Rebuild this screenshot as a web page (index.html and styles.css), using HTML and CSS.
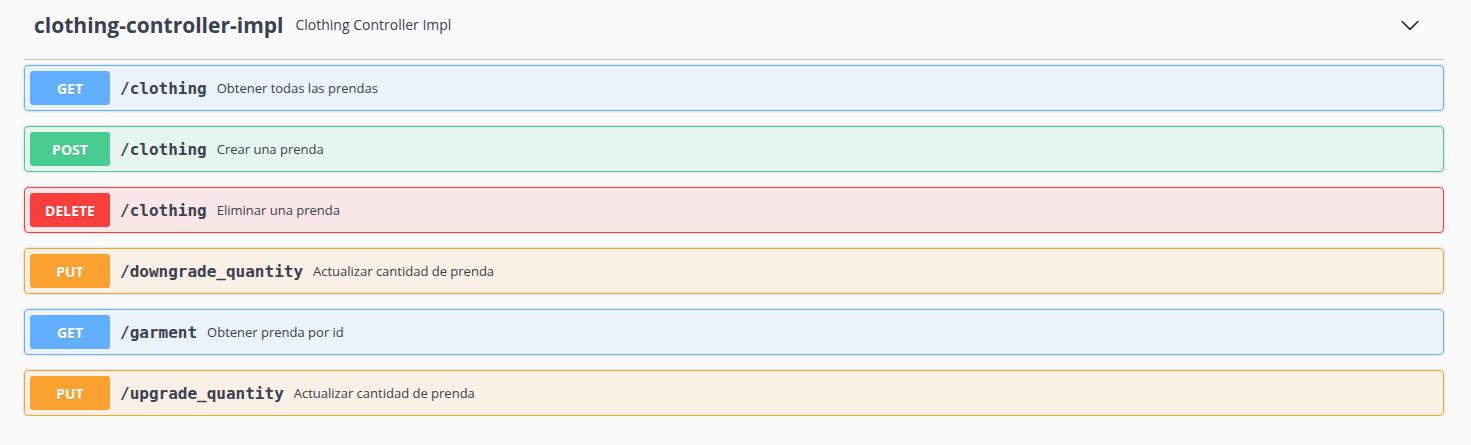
FILE: index.html
```html
<!DOCTYPE html>
<html>
<head>
<meta charset="utf-8">
<link rel="stylesheet" href="styles.css">
</head>
<body>
<div class="section">
  <h4 class="tag">
    <span class="tag-name">clothing-controller-impl</span>
    <small class="tag-desc">Clothing Controller Impl</small>
    <span class="spacer"></span>
    <svg class="arrow" width="20" height="20" viewBox="0 0 20 20"><path d="M17.418 6.109c.272-.268.709-.268.979 0s.271.701 0 .969l-7.908 7.83c-.27.268-.707.268-.979 0l-7.908-7.83c-.27-.268-.27-.701 0-.969.271-.268.709-.268.979 0L10 13.25l7.418-7.141z" fill="#1b1b1b"/></svg>
  </h4>
  <div class="ops">
    <div class="op get"><span class="method">GET</span><span class="path">/clothing</span><span class="desc">Obtener todas las prendas</span></div>
    <div class="op post"><span class="method">POST</span><span class="path">/clothing</span><span class="desc">Crear una prenda</span></div>
    <div class="op delete"><span class="method">DELETE</span><span class="path">/clothing</span><span class="desc">Eliminar una prenda</span></div>
    <div class="op put"><span class="method">PUT</span><span class="path">/downgrade_quantity</span><span class="desc">Actualizar cantidad de prenda</span></div>
    <div class="op get"><span class="method">GET</span><span class="path">/garment</span><span class="desc">Obtener prenda por id</span></div>
    <div class="op put"><span class="method">PUT</span><span class="path">/upgrade_quantity</span><span class="desc">Actualizar cantidad de prenda</span></div>
  </div>
</div>
</body>
</html>
```
FILE: styles.css
```css
html, body {
  margin: 0;
  padding: 0;
  background: #fafafa;
}
body {
  padding: 0 27px 0 24px;
  font-family: "Open Sans", sans-serif;
  color: #3b4151;
}
.tag {
  margin: 0 0 5px;
  height: 60px;
  box-sizing: border-box;
  padding: 0 24px 0 10px;
  display: flex;
  align-items: center;
  border-bottom: 1px solid rgba(59, 65, 81, 0.3);
  font-weight: 700;
}
.tag-name {
  font-size: 21px;
  font-weight: 700;
  color: #3b4151;
  position: relative;
  top: -5px;
}
.tag-desc {
  font-size: 14px;
  font-weight: 400;
  padding: 0 12px;
  position: relative;
  top: -5px;
}
.spacer { flex: 1; }
.arrow { position: relative; top: -5px; }
.ops {
  display: flex;
  flex-direction: column;
  gap: 15px;
}
.op {
  display: flex;
  align-items: center;
  padding: 5px;
  border: 1px solid;
  border-radius: 4px;
  box-shadow: 0 0 3px rgba(0, 0, 0, 0.19);
}
.method {
  min-width: 80px;
  box-sizing: border-box;
  padding: 6px 0;
  height: 34px;
  display: flex;
  align-items: center;
  justify-content: center;
  border-radius: 3px;
  color: #fff;
  font-size: 14px;
  font-weight: 700;
  text-shadow: 0 1px 0 rgba(0, 0, 0, 0.1);
}
.path {
  padding: 0 10px;
  font-family: "DejaVu Sans Mono", monospace;
  font-size: 16px;
  font-weight: 700;
  color: #3b4151;
}
.desc {
  font-size: 13px;
  color: #3b4151;
}
.get { background: rgba(97, 175, 254, 0.1); border-color: #61affe; }
.get .method { background: #61affe; }
.post { background: rgba(73, 204, 144, 0.1); border-color: #49cc90; }
.post .method { background: #49cc90; }
.delete { background: rgba(249, 62, 62, 0.1); border-color: #f93e3e; }
.delete .method { background: #f93e3e; }
.put { background: rgba(252, 161, 48, 0.1); border-color: #fca130; }
.put .method { background: #fca130; }
```
